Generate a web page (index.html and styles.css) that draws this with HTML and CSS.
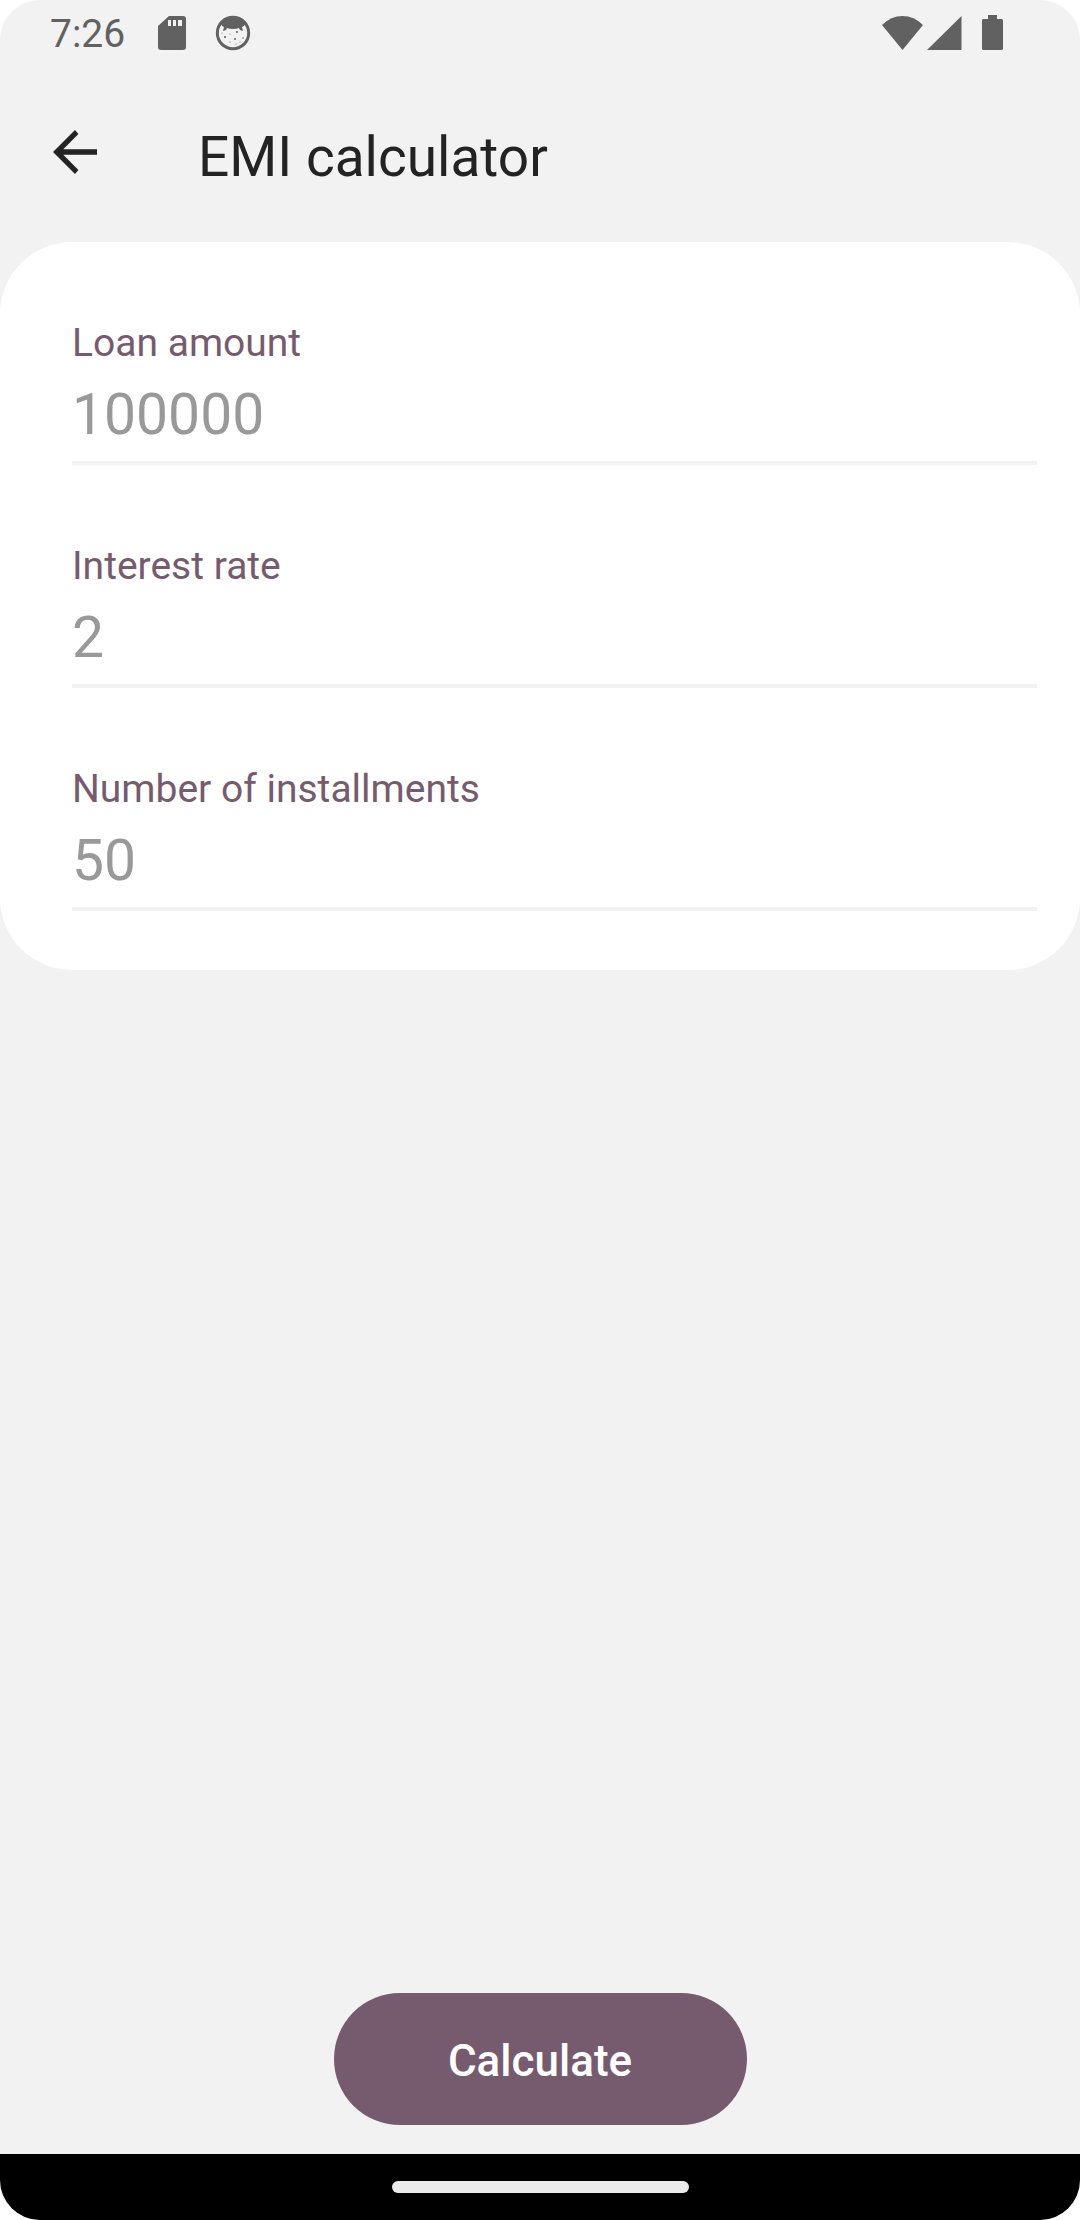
FILE: index.html
```html
<!DOCTYPE html>
<html lang="en">
<head>
<meta charset="utf-8">
<meta name="viewport" content="width=device-width, initial-scale=1">
<title>EMI calculator</title>
<link rel="stylesheet" href="styles.css">
</head>
<body>
<div class="screen">
  <div class="status-bar">
    <span class="clock">7:26</span>
    <svg class="sd-icon" width="28" height="36" viewBox="0 0 28 36" aria-hidden="true">
      <path fill="currentColor" fill-rule="evenodd" d="M11 1H25Q28 1 28 4V32Q28 35 25 35H3Q0 35 0 32V11ZM10 5V11H13V5ZM15 5V11H18V5ZM20 5V11H24V5Z"/>
    </svg>
    <svg class="face-icon" width="36" height="36" viewBox="0 0 36 36" aria-hidden="true">
      <circle cx="18" cy="18" r="15.7" fill="none" stroke="currentColor" stroke-width="3"/>
      <path fill="currentColor" d="M6 9Q10 2 18 2T30 9Q29 12 27 12L28 16L25 15L24 13Q22 14 18 14T12 13L11 15L8 16L9 12Q7 12 6 9Z"/>
      <g fill="currentColor">
        <circle cx="10" cy="22" r="1.1"/><circle cx="22" cy="17" r="1"/><circle cx="20" cy="24" r="1"/><circle cx="15" cy="27" r=".6"/><circle cx="28" cy="23" r=".8"/><circle cx="15" cy="19" r=".5"/><circle cx="7" cy="18" r=".5"/><circle cx="21" cy="29" r=".6"/><circle cx="25" cy="27" r=".5"/>
      </g>
    </svg>
    <span class="system-icons">
      <svg width="41" height="36" viewBox="0 0 41 36" aria-hidden="true"><path fill="currentColor" d="M0 10Q9 1 20.500 1T41 10L20.500 35Z"/></svg>
      <svg width="35" height="36" viewBox="0 0 35 36" aria-hidden="true"><path fill="currentColor" d="M34.500 1V35H0Z"/></svg>
      <svg class="battery-icon" width="21" height="36" viewBox="0 0 21 36" aria-hidden="true"><path fill="currentColor" d="M6 0H15V4H20L21 5V34L20 35H1L0 34V5L1 4H6Z"/></svg>
    </span>
  </div>

  <header class="app-bar">
    <button class="back" type="button" aria-label="Back">
      <svg width="44" height="44" viewBox="0 0 44 44" aria-hidden="true"><path fill="currentColor" d="M44 19.300V24.700H10.300L25.400 40L22 44L0 22L22 0L25.400 4L10.300 19.300Z"/></svg>
    </button>
    <h1 class="title">EMI calculator</h1>
  </header>

  <form class="emi-form">
    <div class="card">
      <div class="field">
        <label for="amount">Loan amount</label>
        <input id="amount" type="text" inputmode="numeric" placeholder="100000">
      </div>
      <div class="field">
        <label for="rate">Interest rate</label>
        <input id="rate" type="text" inputmode="decimal" placeholder="2">
      </div>
      <div class="field">
        <label for="installments">Number of installments</label>
        <input id="installments" type="text" inputmode="numeric" placeholder="50">
      </div>
    </div>
    <button class="calculate" type="submit">Calculate</button>
  </form>

  <div class="nav-bar"><div class="handle"></div></div>
</div>
</body>
</html>
```
FILE: styles.css
```css
* {
  box-sizing: border-box;
}

body {
  margin: 0;
  background: #fff;
  font-family: Roboto, sans-serif;
}

svg {
  display: block;
  flex: none;
}

.screen {
  display: flex;
  flex-direction: column;
  min-height: 100vh;
  overflow: hidden;
  border-radius: 40px;
  background: #f2f2f2;
}

.status-bar {
  display: flex;
  align-items: center;
  height: 66px;
  padding: 0 77px 0 50px;
  color: #616161;
}

.clock {
  padding-top: 2px;
  font-size: 39px;
  line-height: 46px;
}

.sd-icon {
  margin-left: 33px;
}

.face-icon {
  margin-left: 29px;
}

.system-icons {
  display: flex;
  gap: 4px;
  margin-left: auto;
}

.system-icons .battery-icon {
  margin-left: 16px;
}

.app-bar {
  display: flex;
  align-items: flex-start;
  gap: 96px;
  padding: 58px 48px 52px;
  color: #232323;
}

.back {
  display: flex;
  padding: 6px 5px;
  border: 0;
  background: none;
  color: inherit;
}

.title {
  margin: 0;
  font-size: 55px;
  font-weight: 400;
  line-height: 66px;
}

.emi-form {
  display: flex;
  flex: 1;
  flex-direction: column;
  align-items: center;
  justify-content: space-between;
  gap: 48px;
  padding-bottom: 29px;
}

.card {
  display: flex;
  flex-direction: column;
  align-self: stretch;
  gap: 78px;
  padding: 78px 43px 59px 72px;
  border-radius: 72px;
  background: #fff;
}

.field {
  display: flex;
  flex-direction: column;
  gap: 15px;
}

.field label {
  color: #765b6e;
  font-size: 39px;
  line-height: 46px;
}

.field input {
  width: 100%;
  height: 84px;
  padding: 0 0 13px;
  border: 0;
  border-bottom: 4px solid #f2f2f2;
  border-radius: 0;
  outline: 0;
  background: none;
  color: #232323;
  font: 57px/67px Roboto, sans-serif;
}

.field input::placeholder {
  color: #999;
  opacity: 1;
}

.calculate {
  width: 413px;
  padding: 42px 0 38px;
  border: 0;
  border-radius: 66px;
  background: #765b6e;
  color: #fff;
  font: 500 44px/52px Roboto, sans-serif;
}

.nav-bar {
  display: flex;
  align-items: center;
  justify-content: center;
  height: 66px;
  background: #000;
}

.handle {
  width: 297px;
  height: 12px;
  border-radius: 6px;
  background: #ebebeb;
}
```
